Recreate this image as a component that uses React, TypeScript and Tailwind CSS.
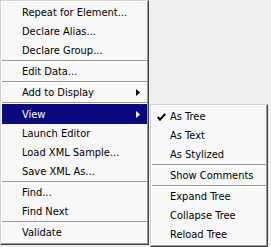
import React from "react";

type Item = { label: string; sub?: boolean; active?: boolean; checked?: boolean } | "sep";

const mainItems: Item[] = [
  { label: "Repeat for Element..." },
  { label: "Declare Alias..." },
  { label: "Declare Group..." },
  "sep",
  { label: "Edit Data..." },
  "sep",
  { label: "Add to Display", sub: true },
  "sep",
  { label: "View", sub: true, active: true },
  { label: "Launch Editor" },
  { label: "Load XML Sample..." },
  { label: "Save XML As..." },
  "sep",
  { label: "Find..." },
  { label: "Find Next" },
  "sep",
  { label: "Validate" },
];

const viewItems: Item[] = [
  { label: "As Tree", checked: true },
  { label: "As Text" },
  { label: "As Stylized" },
  "sep",
  { label: "Show Comments" },
  "sep",
  { label: "Expand Tree" },
  { label: "Collapse Tree" },
  { label: "Reload Tree" },
];

const Arrow = ({ white }: { white?: boolean }) => (
  <svg width="4" height="7" viewBox="0 0 4 7" className="shrink-0">
    <path d="M0 0 L4 3.5 L0 7 Z" fill={white ? "#ffffff" : "#000000"} />
  </svg>
);

const Check = () => (
  <svg width="9" height="8" viewBox="0 0 9 8" className="shrink-0">
    <path d="M0.8 4 L3 6.6 L8.2 0.8" fill="none" stroke="#000" strokeWidth="2" />
  </svg>
);

const Menu = ({ items, width, indent }: { items: Item[]; width: string; indent: string }) => (
  <div className={`${width} border-t border-l border-[#d4d4d4] border-r border-b border-r-[#404040] border-b-[#404040] bg-[#f8f8f8]`}>
    <div className="border-t border-l border-white border-r border-b border-r-[#9a9a9a] border-b-[#9a9a9a] py-px">
      {items.map((it, i) =>
        it === "sep" ? (
          <div key={i} className="h-[2px] border-t border-[#9a9a9a] border-b border-b-white" />
        ) : (
          <div
            key={i}
            className={`flex items-center pr-[7px] ${it.active ? "h-[20px] bg-[#0a0a80] text-white" : "h-[19px] text-black"}`}
          >
            <div className={`${indent} flex items-center justify-center shrink-0`}>
              {it.checked && <Check />}
            </div>
            <span className="flex-1 whitespace-nowrap">{it.label}</span>
            {it.sub && <Arrow white={it.active} />}
          </div>
        )
      )}
    </div>
  </div>
);

export default function App() {
  return (
    <div
      className="w-[271px] h-[247px] overflow-hidden bg-[#efefef] flex items-start text-[11px] leading-none"
      style={{ fontFamily: '"DejaVu Sans Condensed", "DejaVu Sans", sans-serif', fontStretch: "condensed" }}
    >
      <Menu items={mainItems} width="w-[149px]" indent="w-[20px]" />
      <div className="ml-[1px] mt-[104px]">
        <Menu items={viewItems} width="w-[118px]" indent="w-[17px] ml-[1px]" />
      </div>
    </div>
  );
}
